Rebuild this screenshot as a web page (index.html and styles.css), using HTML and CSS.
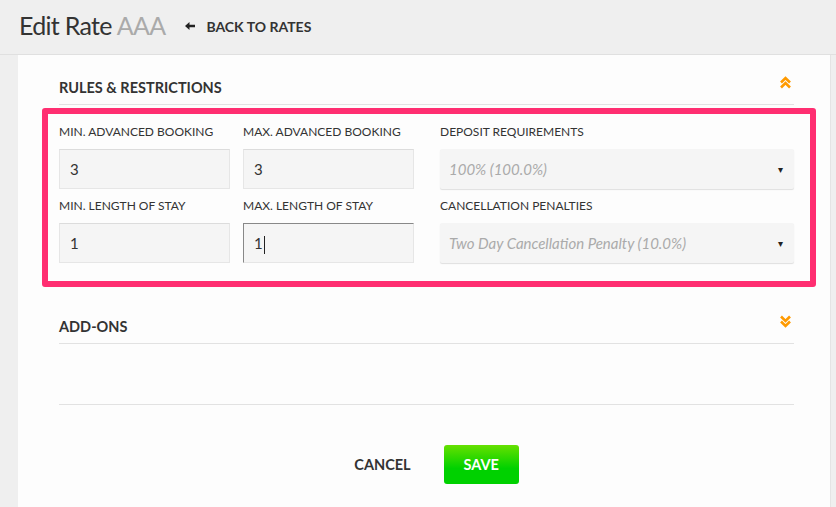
FILE: index.html
```html
<!DOCTYPE html>
<html lang="en">
  <head>
    <meta charset="UTF-8" />
    <title>Edit Rate</title>
    <link rel="stylesheet" href="styles.css">
  </head>
  <body>
    <header class="topbar">
      <h1 class="title">Edit Rate <span class="rate-code">AAA</span></h1>
      <a class="back" href="#">
        <svg class="back-arrow" width="10" height="8" viewBox="0 0 10 8">
          <path d="M0 4 L4.5 0 L4.5 2.8 L10 2.8 L10 5.2 L4.5 5.2 L4.5 8 Z" fill="#222"/>
        </svg>
        BACK TO RATES
      </a>
    </header>

    <div class="panel">
      <section class="section">
        <div class="section-head">
          <h2>RULES &amp; RESTRICTIONS</h2>
          <svg class="chevron" width="13" height="13" viewBox="0 0 13 13">
            <path d="M2 6.5 L6.5 2 L11 6.5 M2 11.5 L6.5 7 L11 11.5" fill="none" stroke="#ff9a00" stroke-width="2.6"/>
          </svg>
        </div>

        <div class="fields highlighted">
          <div class="field">
            <label>MIN. ADVANCED BOOKING</label>
            <input class="input" type="text" value="3" />
          </div>
          <div class="field">
            <label>MAX. ADVANCED BOOKING</label>
            <input class="input" type="text" value="3" />
          </div>
          <div class="field">
            <label>DEPOSIT REQUIREMENTS</label>
            <div class="select">100% (100.0%)<span class="caret">&#9662;</span></div>
          </div>
          <div class="field">
            <label>MIN. LENGTH OF STAY</label>
            <input class="input" type="text" value="1" />
          </div>
          <div class="field">
            <label>MAX. LENGTH OF STAY</label>
            <div class="input focused">1<span class="cursor"></span></div>
          </div>
          <div class="field">
            <label>CANCELLATION PENALTIES</label>
            <div class="select">Two Day Cancellation Penalty (10.0%)<span class="caret">&#9662;</span></div>
          </div>
        </div>
      </section>

      <section class="section addons">
        <div class="section-head">
          <h2>ADD-ONS</h2>
          <svg class="chevron" width="13" height="13" viewBox="0 0 13 13">
            <path d="M2 1.5 L6.5 6 L11 1.5 M2 6.5 L6.5 11 L11 6.5" fill="none" stroke="#ff9a00" stroke-width="2.6"/>
          </svg>
        </div>
        <div class="addons-body"></div>
      </section>

      <div class="actions">
        <button class="cancel">CANCEL</button>
        <button class="save">SAVE</button>
      </div>
    </div>
  </body>
</html>
```

FILE: styles.css
```css
body {
  margin: 0;
  padding: 0;
  font-family: "Lato", "Open Sans", sans-serif;
  background: #efefef;
  color: #333;
  height: 507px;
  overflow: hidden;
}

.topbar {
  display: flex;
  align-items: center;
  padding-left: 19px;
  padding-bottom: 4px;
  box-sizing: border-box;
  height: 55px;
  border-bottom: 1px solid #e0e0e0;
}

.title {
  margin: 0;
  font-size: 25px;
  font-weight: 400;
  color: #333;
  letter-spacing: -0.7px;
}

.rate-code {
  color: #aaa;
}

.back {
  display: flex;
  align-items: center;
  margin-left: 20px;
  margin-top: 2px;
  color: #333;
  text-decoration: none;
  font-weight: 700;
  font-size: 14px;
}

.back-arrow {
  margin-right: 11px;
}

.panel {
  margin-left: 18px;
  width: 813px;
  height: 452px;
  background: #fdfdfd;
  padding: 0 36px 0 41px;
  box-sizing: border-box;
  border-right: 1px solid #e4e4e4;
}

.section-head {
  display: flex;
  justify-content: space-between;
  align-items: flex-start;
  height: 49px;
  border-bottom: 1px solid #e2e2e2;
}

.section-head h2 {
  margin: 24px 0 0 0;
  font-size: 14.5px;
  line-height: 17px;
  font-weight: 700;
  color: #333;
}

.chevron {
  margin-top: 21px;
  margin-right: 2px;
}

.fields {
  display: grid;
  grid-template-columns: 171px 171px 1fr;
  column-gap: 13px;
  row-gap: 8px;
  padding-top: 18px;
  position: relative;
}

.fields .field:nth-child(3n) {
  margin-left: 13px;
}

.highlighted::after {
  content: "";
  position: absolute;
  left: -17px;
  right: -22px;
  top: 3px;
  bottom: -24px;
  border: 6px solid #ff2e71;
  border-radius: 3px;
  pointer-events: none;
}

.field label {
  display: block;
  height: 18px;
  line-height: 18px;
  font-size: 12px;
  color: #333;
  margin-bottom: 8px;
}

.input {
  display: block;
  box-sizing: border-box;
  width: 100%;
  height: 40px;
  border: 1px solid #e6e6e6;
  border-top-color: #dcdcdc;
  background: #f5f5f5;
  font-family: inherit;
  font-size: 15px;
  color: #333;
  padding: 0 10px;
  line-height: 38px;
  outline: none;
}

.input.focused {
  border-color: #888;
  border-right-color: #e6e6e6;
  border-bottom-color: #e6e6e6;
}

.cursor {
  display: inline-block;
  width: 1px;
  height: 18px;
  background: #222;
  vertical-align: middle;
  margin-left: 1px;
}

.select {
  position: relative;
  box-sizing: border-box;
  height: 40px;
  line-height: 40px;
  background: #f5f5f5;
  border-radius: 2px;
  box-shadow: 0 1px 1px rgba(0, 0, 0, 0.12);
  padding-left: 9px;
  font-size: 15px;
  font-style: italic;
  color: #aaa;
}

.caret {
  position: absolute;
  right: 11px;
  top: 0;
  font-style: normal;
  font-size: 10px;
  color: #222;
}

.addons {
  margin-top: 31px;
}

.addons-body {
  height: 60px;
  border-bottom: 1px solid #e2e2e2;
}

.actions {
  display: flex;
  justify-content: center;
  gap: 33px;
  margin-top: 40px;
  padding-left: 20px;
}

.actions button {
  font-family: inherit;
  font-weight: 700;
  font-size: 14.5px;
  border: none;
  cursor: pointer;
}

.cancel {
  background: none;
  color: #333;
  padding: 0;
}

.save {
  width: 75px;
  height: 39px;
  color: white;
  border-radius: 3px;
  background: linear-gradient(#66e000, #00d100 60%);
}
```
